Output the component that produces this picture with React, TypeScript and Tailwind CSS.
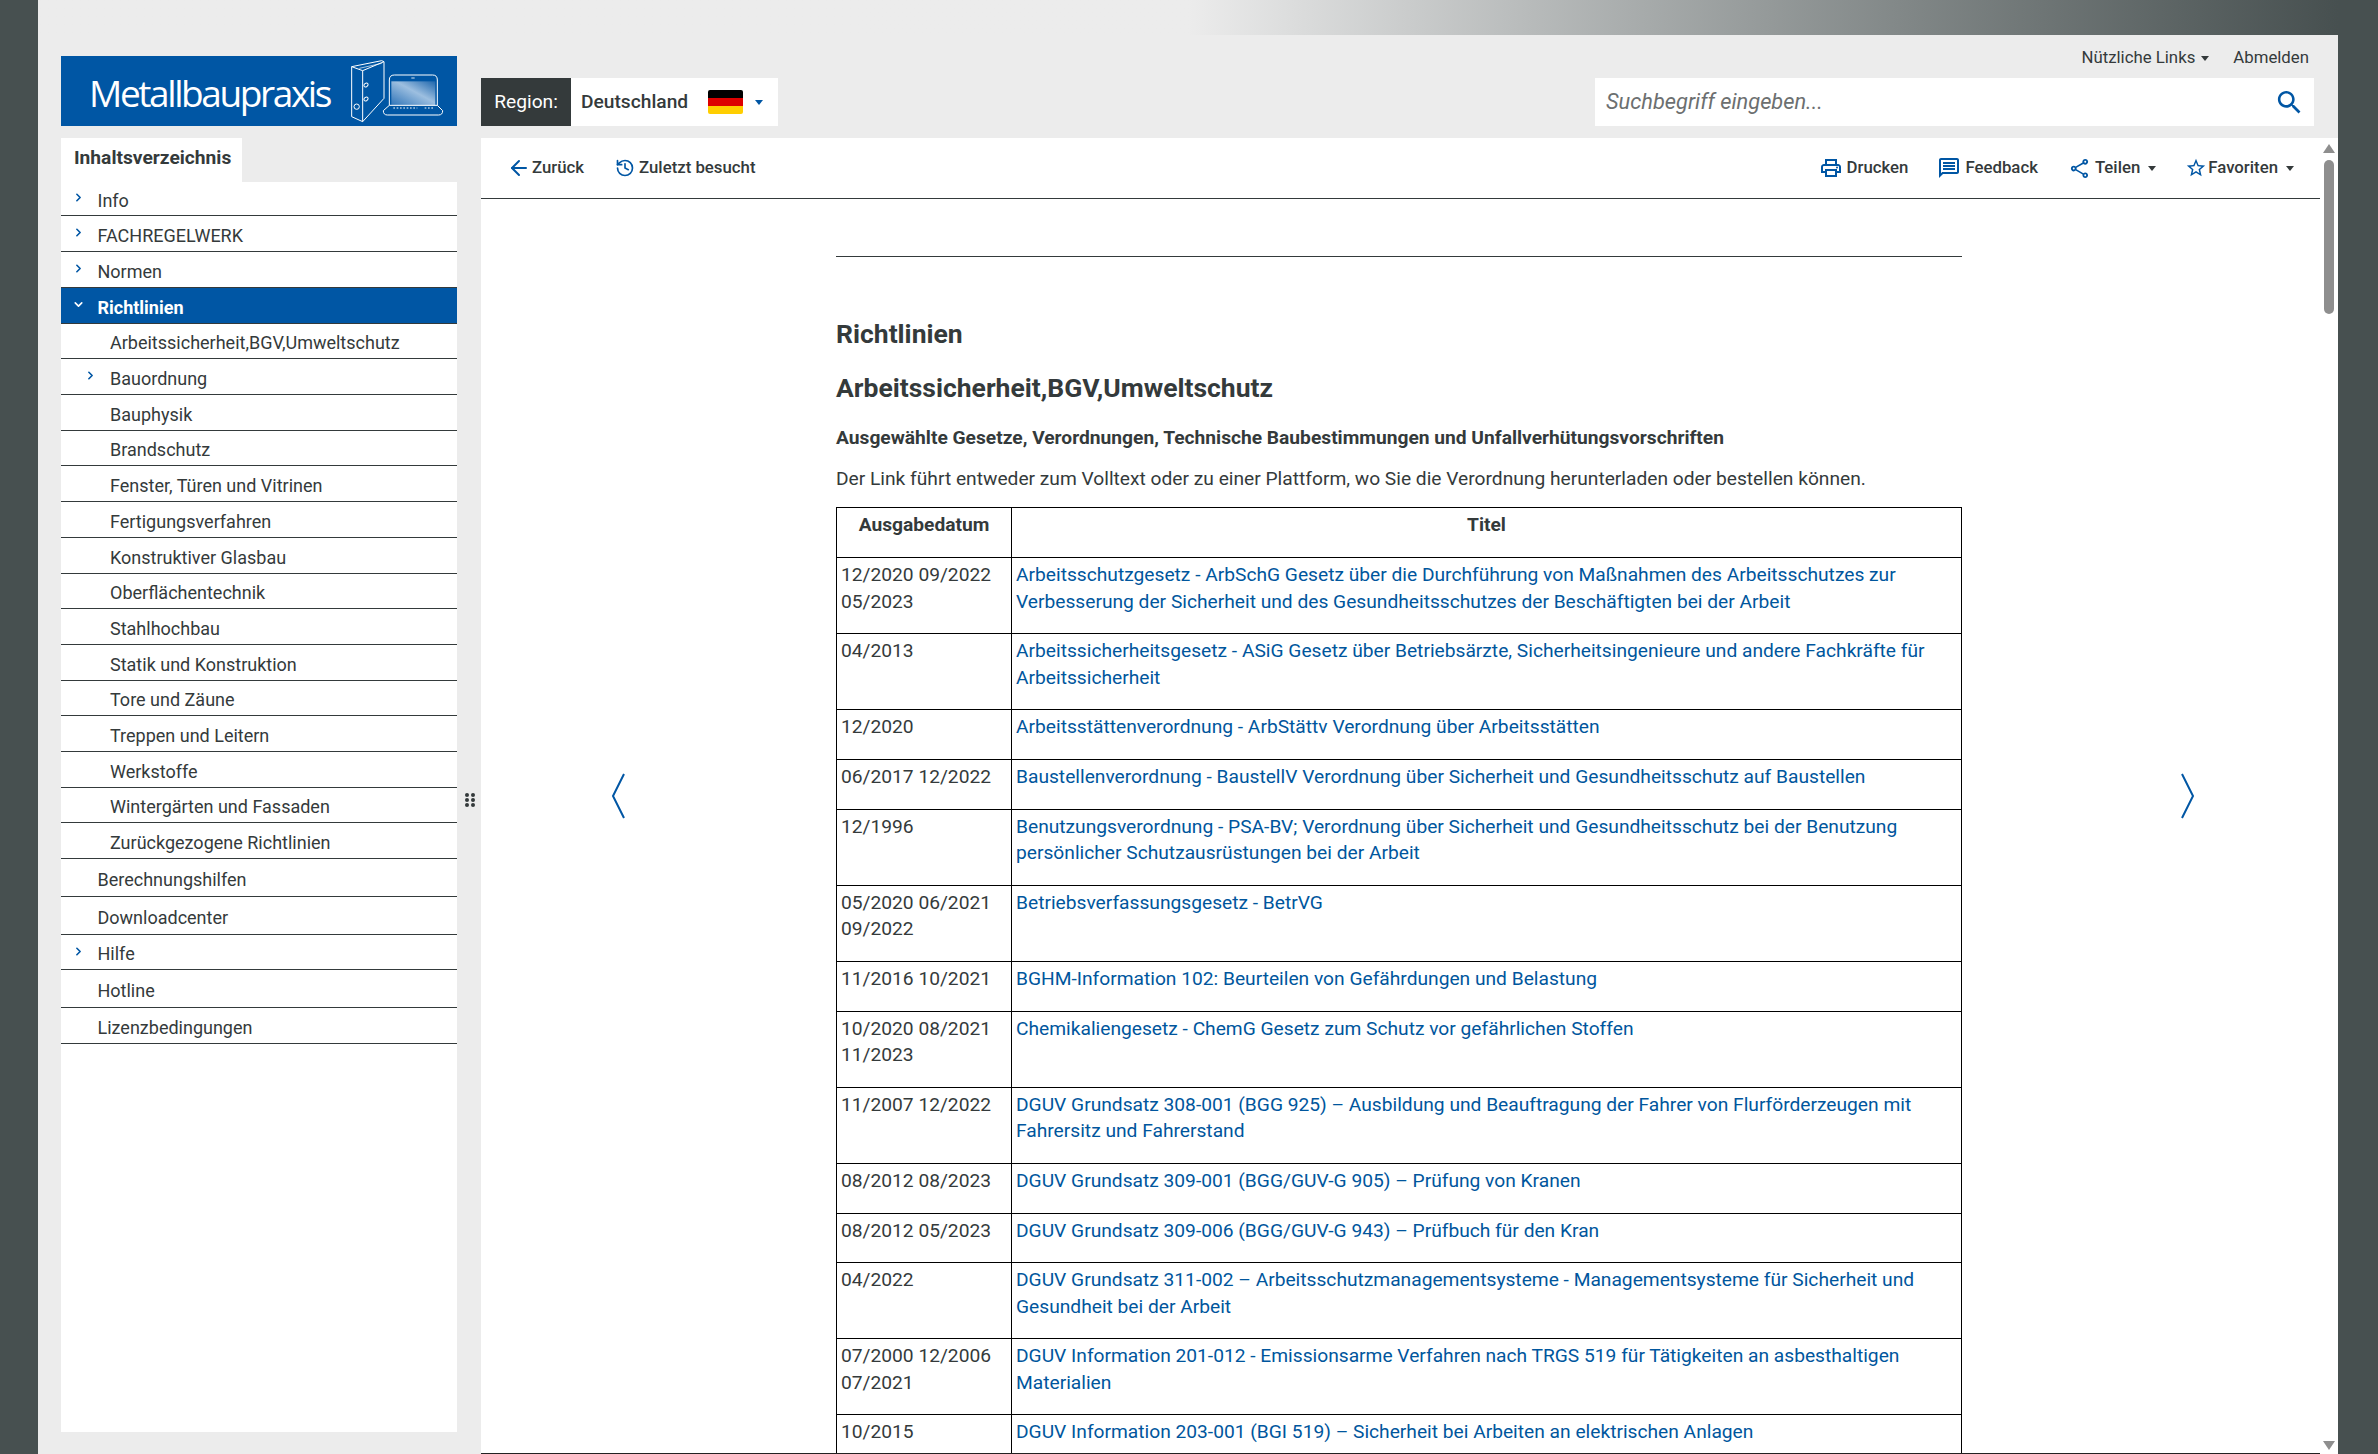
import { ArrowLeft, ChevronDown, ChevronRight, History } from 'lucide-react';

type NavItem = { label: string; h: string; sub?: boolean; chevron?: boolean; active?: boolean };

const nav: NavItem[] = [
  { label: 'Info', h: 'h-[34px]', chevron: true },
  { label: 'FACHREGELWERK', h: 'h-[36px]', chevron: true },
  { label: 'Normen', h: 'h-[36px]', chevron: true },
  { label: 'Richtlinien', h: 'h-[36px]', active: true },
  { label: 'Arbeitssicherheit,BGV,Umweltschutz', h: 'h-[35px]', sub: true },
  { label: 'Bauordnung', h: 'h-[36px]', sub: true, chevron: true },
  { label: 'Bauphysik', h: 'h-[36px]', sub: true },
  { label: 'Brandschutz', h: 'h-[35px]', sub: true },
  { label: 'Fenster, Türen und Vitrinen', h: 'h-[36px]', sub: true },
  { label: 'Fertigungsverfahren', h: 'h-[36px]', sub: true },
  { label: 'Konstruktiver Glasbau', h: 'h-[36px]', sub: true },
  { label: 'Oberflächentechnik', h: 'h-[35px]', sub: true },
  { label: 'Stahlhochbau', h: 'h-[36px]', sub: true },
  { label: 'Statik und Konstruktion', h: 'h-[36px]', sub: true },
  { label: 'Tore und Zäune', h: 'h-[35px]', sub: true },
  { label: 'Treppen und Leitern', h: 'h-[36px]', sub: true },
  { label: 'Werkstoffe', h: 'h-[36px]', sub: true },
  { label: 'Wintergärten und Fassaden', h: 'h-[35px]', sub: true },
  { label: 'Zurückgezogene Richtlinien', h: 'h-[36px]', sub: true },
  { label: 'Berechnungshilfen', h: 'h-[38px]' },
  { label: 'Downloadcenter', h: 'h-[38px]' },
  { label: 'Hilfe', h: 'h-[35px]', chevron: true },
  { label: 'Hotline', h: 'h-[38px]' },
  { label: 'Lizenzbedingungen', h: 'h-[36px]' },
];

const rows: [string, string][] = [
  ['12/2020 09/2022 05/2023', 'Arbeitsschutzgesetz - ArbSchG Gesetz über die Durchführung von Maßnahmen des Arbeitsschutzes zur Verbesserung der Sicherheit und des Gesundheitsschutzes der Beschäftigten bei der Arbeit'],
  ['04/2013', 'Arbeitssicherheitsgesetz - ASiG Gesetz über Betriebsärzte, Sicherheitsingenieure und andere Fachkräfte für Arbeitssicherheit'],
  ['12/2020', 'Arbeitsstättenverordnung - ArbStättv Verordnung über Arbeitsstätten'],
  ['06/2017 12/2022', 'Baustellenverordnung - BaustellV Verordnung über Sicherheit und Gesundheitsschutz auf Baustellen'],
  ['12/1996', 'Benutzungsverordnung - PSA-BV; Verordnung über Sicherheit und Gesundheitsschutz bei der Benutzung persönlicher Schutzausrüstungen bei der Arbeit'],
  ['05/2020 06/2021 09/2022', 'Betriebsverfassungsgesetz - BetrVG'],
  ['11/2016 10/2021', 'BGHM-Information 102: Beurteilen von Gefährdungen und Belastung'],
  ['10/2020 08/2021 11/2023', 'Chemikaliengesetz - ChemG Gesetz zum Schutz vor gefährlichen Stoffen'],
  ['11/2007 12/2022', 'DGUV Grundsatz 308-001 (BGG 925) – Ausbildung und Beauftragung der Fahrer von Flurförderzeugen mit Fahrersitz und Fahrerstand'],
  ['08/2012 08/2023', 'DGUV Grundsatz 309-001 (BGG/GUV-G 905) – Prüfung von Kranen'],
  ['08/2012 05/2023', 'DGUV Grundsatz 309-006 (BGG/GUV-G 943) – Prüfbuch für den Kran'],
  ['04/2022', 'DGUV Grundsatz 311-002 – Arbeitsschutzmanagementsysteme - Managementsysteme für Sicherheit und Gesundheit bei der Arbeit'],
  ['07/2000 12/2006 07/2021', 'DGUV Information 201-012 - Emissionsarme Verfahren nach TRGS 519 für Tätigkeiten an asbesthaltigen Materialien'],
  ['10/2015', 'DGUV Information 203-001 (BGI 519) – Sicherheit bei Arbeiten an elektrischen Anlagen'],
];

function Caret({ color = 'border-t-[#343a3b]' }: { color?: string }) {
  return <span className={`inline-block h-0 w-0 border-x-[4.5px] border-t-[5px] border-x-transparent ${color}`} />;
}

function MaterialIcon({ size, d }: { size: number; d: string }) {
  return (
    <svg width={size} height={size} viewBox="0 0 24 24" fill="#0056a4" className="shrink-0">
      <path d={d} />
    </svg>
  );
}

function LogoArt() {
  return (
    <svg width="100" height="70" viewBox="60 48 300 210" fill="none" stroke="white" strokeWidth="3" strokeLinejoin="round">
      <defs>
        <linearGradient id="screen" x1="0" y1="1" x2="1" y2="0">
          <stop offset="0" stopColor="#2f74b8" />
          <stop offset="0.55" stopColor="#9dbfe0" />
          <stop offset="1" stopColor="#1f67ad" />
        </linearGradient>
      </defs>
      <path d="M65 80 L98 92 V245 L65 230 Z" />
      <path d="M65 80 L155 62 L162 65 L98 92 M162 65 V175 L98 245" />
      <path d="M88 85 L155 70" strokeWidth="2" />
      <ellipse cx="108" cy="135" rx="7" ry="5" transform="rotate(-40 108 135)" />
      <ellipse cx="108" cy="177" rx="7" ry="5" transform="rotate(-40 108 177)" />
      <circle cx="80" cy="200" r="8" />
      <rect x="184" y="124" width="132" height="72" fill="url(#screen)" stroke="none" />
      <path d="M178 196 V120 Q178 105 193 105 H308 Q322 105 322 120 V196" />
      <path d="M178 196 L160 212 Q160 225 172 225 H326 Q338 225 338 212 L322 196 Z" />
      <path d="M190 204 H262 M284 204 H312" strokeDasharray="5 5" />
      <path d="M244 114 H254" strokeWidth="2.5" />
    </svg>
  );
}

function Flag() {
  return (
    <span className="flex h-[24px] w-[35px] flex-col overflow-hidden rounded-[2px]">
      <span className="flex-1 bg-black" />
      <span className="flex-1 bg-[#dd0000]" />
      <span className="flex-1 bg-[#ffce00]" />
    </span>
  );
}

function Sidebar() {
  return (
    <div className="flex w-[396px] shrink-0 flex-col">
      <div className="flex h-[44px] w-[181px] items-center bg-white pb-[3px] pl-[13px] text-[19.2px] font-bold">Inhaltsverzeichnis</div>
      <div className="flex-1 bg-white">
        {nav.map((n) => (
          <div
            key={n.label}
            className={`flex items-center border-b-[1.5px] border-[#343a3b] pt-[3px] text-[18px] ${n.h} ${
              n.active ? 'bg-[#0056a4] font-bold text-white' : ''
            } ${n.sub ? 'pl-[49px]' : 'pl-[36.5px]'}`}
          >
            <span className="relative">
              {n.chevron && <ChevronRight size={13} strokeWidth={3} className="absolute top-[-9px] left-[-26px] text-[#0056a4]" />}
              {n.active && <ChevronDown size={13} strokeWidth={3} className="absolute top-[-9px] left-[-26px] text-white" />}
            </span>
            {n.label}
          </div>
        ))}
      </div>
    </div>
  );
}

function Toolbar() {
  return (
    <div className="flex h-[61px] shrink-0 items-center justify-between border-b-[1.5px] border-[#343a3b] pr-[26px] pl-[26px] text-[16.8px] font-medium">
      <div className="flex items-center">
        <span className="flex items-center gap-[1px]">
          <ArrowLeft size={24} strokeWidth={2} className="text-[#0056a4]" />
          Zurück
        </span>
        <span className="ml-[31px] flex items-center gap-[4px]">
          <History size={20} strokeWidth={2} className="text-[#0056a4]" />
          Zuletzt besucht
        </span>
      </div>
      <div className="flex items-center">
        <span className="flex items-center gap-[4px]">
          <svg width="24" height="24" viewBox="0 0 24 24" fill="#0056a4" className="shrink-0">
            <path d="M19 8h-1V3H6v5H5c-1.66 0-3 1.34-3 3v6h4v4h12v-4h4v-6c0-1.66-1.34-3-3-3zM8 5h8v3H8V5zm8 12v2H8v-4h8v2zm2-2v-2H6v2H4v-4c0-.55.45-1 1-1h14c.55 0 1 .45 1 1v4h-2z" />
            <circle cx="18" cy="11.5" r="1" />
          </svg>
          Drucken
        </span>
        <span className="ml-[29px] flex items-center gap-[4px]">
          <MaterialIcon size={24} d="M20 4v12H5.17L4 17.17V4h16m0-2H4c-1.1 0-2 .9-2 2v18l4-4h14c1.1 0 2-.9 2-2V4c0-1.1-.9-2-2-2zm-2 10H6v2h12v-2zm0-3H6v2h12V9zm0-3H6v2h12V6z" />
          Feedback
        </span>
        <span className="ml-[30px] flex items-center gap-[4px]">
          <MaterialIcon size={23} d="M18 16.08c-.76 0-1.44.3-1.96.77L8.91 12.7c.05-.23.09-.46.09-.7s-.04-.47-.09-.7l7.05-4.11c.54.5 1.25.81 2.04.81 1.66 0 3-1.34 3-3s-1.34-3-3-3-3 1.34-3 3c0 .24.04.47.09.7L8.04 9.81C7.5 9.31 6.79 9 6 9c-1.66 0-3 1.34-3 3s1.34 3 3 3c.79 0 1.5-.31 2.04-.81l7.12 4.16c-.05.21-.08.43-.08.65 0 1.61 1.31 2.92 2.92 2.92 1.61 0 2.92-1.31 2.92-2.92s-1.31-2.92-2.92-2.92zM18 4c.55 0 1 .45 1 1s-.45 1-1 1-1-.45-1-1 .45-1 1-1zM6 13c-.55 0-1-.45-1-1s.45-1 1-1 1 .45 1 1-.45 1-1 1zm12 7.02c-.55 0-1-.45-1-1s.45-1 1-1 1 .45 1 1-.45 1-1 1z" />
          Teilen
          <span className="ml-[4px] flex"><Caret /></span>
        </span>
        <span className="ml-[29px] flex items-center gap-[1px]">
          <MaterialIcon size={22} d="M22 9.24l-7.19-.62L12 2 9.19 8.63 2 9.24l5.46 4.73L5.82 21 12 17.27 18.18 21l-1.63-7.03L22 9.24zM12 15.4l-3.76 2.27 1-4.28-3.32-2.88 4.38-.38L12 6.1l1.71 4.04 4.38.38-3.32 2.88 1 4.28L12 15.4z" />
          Favoriten
          <span className="ml-[7px] flex"><Caret /></span>
        </span>
      </div>
    </div>
  );
}

function Article() {
  return (
    <div className="w-[1126px] pt-[57px]">
      <hr className="border-t-[1.5px] border-[#343a3b]" />
      <h1 className="mt-[59px] text-[26.5px] leading-[36px] font-bold">Richtlinien</h1>
      <h2 className="mt-[18px] text-[26.5px] leading-[36px] font-bold">Arbeitssicherheit,BGV,Umweltschutz</h2>
      <p className="mt-[18px] text-[19.2px] leading-[27px] font-bold">
        Ausgewählte Gesetze, Verordnungen, Technische Baubestimmungen und Unfallverhütungsvorschriften
      </p>
      <p className="mt-[14px] text-[19.2px] leading-[27px]">
        Der Link führt entweder zum Volltext oder zu einer Plattform, wo Sie die Verordnung herunterladen oder bestellen können.
      </p>
      <table className="mt-[15px] w-full table-fixed border-collapse text-[19.2px] leading-[26.6px]">
        <colgroup>
          <col className="w-[175px]" />
          <col />
        </colgroup>
        <thead>
          <tr className="h-[50px]">
            <th className="border-[1.5px] border-black px-[4px] pt-[4px] pb-[18px] align-top font-bold">Ausgabedatum</th>
            <th className="border-[1.5px] border-black px-[4px] pt-[4px] pb-[18px] align-top font-bold">Titel</th>
          </tr>
        </thead>
        <tbody>
          {rows.map(([date, title]) => (
            <tr key={title}>
              <td className="border-[1.5px] border-black px-[4px] pt-[4px] pb-[18px] align-top">{date}</td>
              <td className="border-[1.5px] border-black px-[4px] pt-[4px] pb-[18px] align-top text-[#00569d]">{title}</td>
            </tr>
          ))}
        </tbody>
      </table>
    </div>
  );
}

export default function App() {
  return (
    <div className="flex h-[1454px] w-[2378px] overflow-hidden bg-[#475050] font-['Roboto',sans-serif] text-[#343a3b]">
      <div className="ml-[38px] flex w-[2300px] flex-col">
        <div className="h-[35px] shrink-0 bg-linear-to-r from-[#ececec] from-50% to-[#475050]" />
        <div className="flex min-h-0 flex-1 flex-col bg-[#ececec]">
          <div className="flex h-[103px] shrink-0 pl-[23px]">
            <div className="mt-[21px] flex h-[70px] w-[396px] items-center justify-between bg-[#0056a4] pr-[7px] pl-[28px]">
              <span className="pt-[3px] font-['Open_Sans',sans-serif] text-[37px] leading-none tracking-[-2.4px] text-white">Metallbaupraxis</span>
              <LogoArt />
            </div>
            <div className="ml-[24px] flex min-w-0 flex-1 flex-col">
              <div className="flex h-[43px] items-center justify-end gap-[24px] pt-[3px] pr-[29px] text-[16.8px]">
                <span className="flex items-center gap-[6px]">Nützliche Links<Caret /></span>
                <span>Abmelden</span>
              </div>
              <div className="flex h-[48px] justify-between pr-[24px]">
                <div className="flex h-full items-center bg-white">
                  <span className="flex h-full w-[90px] items-center justify-center bg-[#343a3b] text-[19.2px] text-white">Region:</span>
                  <span className="ml-[10px] w-[127px] text-[19.2px] font-medium">Deutschland</span>
                  <Flag />
                  <span className="mr-[15px] ml-[12px] flex"><Caret color="border-t-[#0056a4]" /></span>
                </div>
                <div className="flex h-full w-[719px] items-center bg-white pr-[9px] pl-[11px]">
                  <input
                    readOnly
                    placeholder="Suchbegriff eingeben..."
                    className="flex-1 bg-transparent text-[21.8px] italic outline-none placeholder:text-[#6c6f70]"
                  />
                  <MaterialIcon size={31} d="M15.5 14h-.79l-.28-.27C15.41 12.59 16 11.11 16 9.5 16 5.91 13.09 3 9.5 3S3 5.91 3 9.5 5.91 16 9.5 16c1.61 0 3.09-.59 4.23-1.57l.27.28v.79l5 4.99L20.49 19l-4.99-5zm-6 0C7.01 14 5 11.99 5 9.5S7.01 5 9.5 5 14 7.01 14 9.5 11.99 14 9.5 14z" />
                </div>
              </div>
            </div>
          </div>
          <div className="flex min-h-0 flex-1 pl-[23px]">
            <div className="flex shrink-0 pb-[22px]">
              <Sidebar />
            </div>
            <div className="flex w-[24px] shrink-0 justify-center pt-[655px] pl-[2px]">
              <div className="grid h-[14px] w-[10px] grid-cols-2 gap-x-[2px] gap-y-[1px]">
                {[0, 1, 2, 3, 4, 5].map((d) => (
                  <span key={d} className="h-[4px] w-[4px] rounded-full bg-[#343a3b]" />
                ))}
              </div>
            </div>
            <div className="relative flex min-w-0 flex-1 bg-white">
              <div className="flex min-w-0 flex-1 flex-col border-b-[1.5px] border-[#222]">
                <Toolbar />
                <div className="flex min-h-0 flex-1 justify-center overflow-hidden pr-[3px]">
                  <Article />
                </div>
              </div>
              <div className="flex w-[18px] shrink-0 flex-col items-center pt-[6px] pb-[4px]">
                <span className="h-0 w-0 border-x-[6px] border-b-[9px] border-x-transparent border-b-[#8e8e8e]" />
                <span className="mt-[7px] h-[154px] w-[10px] rounded-[5px] bg-[#8e8e8e]" />
                <span className="mt-auto h-0 w-0 border-x-[6px] border-t-[9px] border-x-transparent border-t-[#8e8e8e]" />
              </div>
              <svg className="absolute top-[635px] left-[130px]" width="14" height="46" viewBox="0 0 14 46" fill="none" stroke="#0056a4" strokeWidth="2">
                <path d="M13 1 L2 23 L13 45" />
              </svg>
              <svg className="absolute top-[635px] left-[1700px]" width="14" height="46" viewBox="0 0 14 46" fill="none" stroke="#0056a4" strokeWidth="2">
                <path d="M1 1 L12 23 L1 45" />
              </svg>
            </div>
          </div>
        </div>
      </div>
    </div>
  );
}
